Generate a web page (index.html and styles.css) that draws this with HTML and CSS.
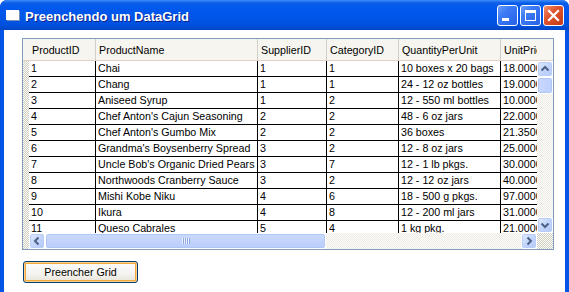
FILE: index.html
```html
<!DOCTYPE html>
<html lang="pt">
<head>
    <meta charset="UTF-8">
    <title>Preenchendo um DataGrid</title>
    <link rel="stylesheet" href="styles.css">
</head>
<body>
    <div class="window">
        <div class="titlebar">
            <svg class="app-icon" width="15" height="12" viewBox="0 0 15 12">
                <rect x="1" y="1" width="13" height="10" fill="#7a8fb8"/>
                <rect x="0" y="0" width="13" height="10" fill="#fff"/>
            </svg>
            <span class="title">Preenchendo um DataGrid</span>
            <div class="controls">
                <div class="ctl">
                    <svg width="19" height="19" viewBox="0 0 19 19"><rect x="4" y="12" width="7" height="3" fill="#fff"/></svg>
                </div>
                <div class="ctl">
                    <svg width="19" height="19" viewBox="0 0 19 19"><rect x="4.5" y="4.5" width="10" height="10" fill="none" stroke="#fff"/><rect x="4" y="4" width="11" height="3" fill="#fff"/></svg>
                </div>
                <div class="ctl close">
                    <svg width="19" height="19" viewBox="0 0 19 19"><path d="M5 5 L14 14 M14 5 L5 14" stroke="#fff" stroke-width="2.2" stroke-linecap="square"/></svg>
                </div>
            </div>
        </div>

        <div class="client">
            <div class="datagrid">
                <div class="corner-head"></div>
                <div class="col-header">
                    <div class="head-cells">
                        <div class="hc c1">ProductID</div>
                        <div class="hc c2">ProductName</div>
                        <div class="hc c3">SupplierID</div>
                        <div class="hc c4">CategoryID</div>
                        <div class="hc c5">QuantityPerUnit</div>
                        <div class="hc c6">UnitPrice</div>
                    </div>
                </div>

                <div class="row-heads"></div>
                <div class="viewport">
                    <div class="row"><div class="c c1">1</div><div class="c c2">Chai</div><div class="c c3">1</div><div class="c c4">1</div><div class="c c5">10 boxes x 20 bags</div><div class="c c6">18.0000</div></div>
                    <div class="row"><div class="c c1">2</div><div class="c c2">Chang</div><div class="c c3">1</div><div class="c c4">1</div><div class="c c5">24 - 12 oz bottles</div><div class="c c6">19.0000</div></div>
                    <div class="row"><div class="c c1">3</div><div class="c c2">Aniseed Syrup</div><div class="c c3">1</div><div class="c c4">2</div><div class="c c5">12 - 550 ml bottles</div><div class="c c6">10.0000</div></div>
                    <div class="row"><div class="c c1">4</div><div class="c c2">Chef Anton's Cajun Seasoning</div><div class="c c3">2</div><div class="c c4">2</div><div class="c c5">48 - 6 oz jars</div><div class="c c6">22.0000</div></div>
                    <div class="row"><div class="c c1">5</div><div class="c c2">Chef Anton's Gumbo Mix</div><div class="c c3">2</div><div class="c c4">2</div><div class="c c5">36 boxes</div><div class="c c6">21.3500</div></div>
                    <div class="row"><div class="c c1">6</div><div class="c c2">Grandma's Boysenberry Spread</div><div class="c c3">3</div><div class="c c4">2</div><div class="c c5">12 - 8 oz jars</div><div class="c c6">25.0000</div></div>
                    <div class="row"><div class="c c1">7</div><div class="c c2">Uncle Bob's Organic Dried Pears</div><div class="c c3">3</div><div class="c c4">7</div><div class="c c5">12 - 1 lb pkgs.</div><div class="c c6">30.0000</div></div>
                    <div class="row"><div class="c c1">8</div><div class="c c2">Northwoods Cranberry Sauce</div><div class="c c3">3</div><div class="c c4">2</div><div class="c c5">12 - 12 oz jars</div><div class="c c6">40.0000</div></div>
                    <div class="row"><div class="c c1">9</div><div class="c c2">Mishi Kobe Niku</div><div class="c c3">4</div><div class="c c4">6</div><div class="c c5">18 - 500 g pkgs.</div><div class="c c6">97.0000</div></div>
                    <div class="row"><div class="c c1">10</div><div class="c c2">Ikura</div><div class="c c3">4</div><div class="c c4">8</div><div class="c c5">12 - 200 ml jars</div><div class="c c6">31.0000</div></div>
                    <div class="row"><div class="c c1">11</div><div class="c c2">Queso Cabrales</div><div class="c c3">5</div><div class="c c4">4</div><div class="c c5">1 kg pkg.</div><div class="c c6">21.0000</div></div>
                </div>
                <div class="vscroll">
                    <div class="sb-btn">
                        <svg width="14" height="14" viewBox="0 0 14 14"><path d="M3.5 8.5 L7 5 L10.5 8.5" fill="none" stroke="#4d6185" stroke-width="2"/></svg>
                    </div>
                    <div class="thumb-v"></div>
                    <div class="track"></div>
                    <div class="sb-btn">
                        <svg width="14" height="14" viewBox="0 0 14 14"><path d="M3.5 5.5 L7 9 L10.5 5.5" fill="none" stroke="#4d6185" stroke-width="2"/></svg>
                    </div>
                </div>

                <div class="row-heads"></div>
                <div class="hscroll">
                    <div class="sb-btn">
                        <svg width="14" height="14" viewBox="0 0 14 14"><path d="M8.5 3.5 L5 7 L8.5 10.5" fill="none" stroke="#4d6185" stroke-width="2"/></svg>
                    </div>
                    <div class="thumb-h"><span class="grip"></span></div>
                    <div class="track"></div>
                    <div class="sb-btn">
                        <svg width="14" height="14" viewBox="0 0 14 14"><path d="M5.5 3.5 L9 7 L5.5 10.5" fill="none" stroke="#4d6185" stroke-width="2"/></svg>
                    </div>
                </div>
                <div class="sb-corner"></div>
            </div>

            <button class="fill-btn" type="button">Preencher Grid</button>
        </div>
    </div>
</body>
</html>
```

FILE: styles.css
```css
body {
    margin: 0;
    font-family: "Liberation Sans", Arial, sans-serif;
    font-size: 10.7px;
    background-color: #fff;
}
.window {
    width: 569px;
    height: 292px;
    display: flex;
    flex-direction: column;
    background-color: #0454e6;
    border-radius: 7px 7px 0 0;
    overflow: hidden;
}
.titlebar {
    height: 30px;
    flex-shrink: 0;
    display: flex;
    align-items: center;
    padding: 0 5px 0 6px;
    background: linear-gradient(#3d8df8 0, #0a5de8 3px, #0058ee 8px, #0055e8 60%, #0050dc 85%, #0045c4 100%);
}
.app-icon {
    margin-top: 2px;
}
.title {
    flex: 1;
    margin: 3px 0 0 4px;
    color: #fff;
    font-size: 13px;
    font-weight: bold;
    text-shadow: 1px 1px #0c1f8a;
}
.controls {
    display: flex;
    gap: 2px;
}
.ctl {
    width: 21px;
    height: 21px;
    box-sizing: border-box;
    border: 1px solid #fff;
    border-radius: 3px;
    display: flex;
    align-items: center;
    justify-content: center;
    background: linear-gradient(135deg, #6b9cf9 0, #3c7bf5 35%, #2660e6 100%);
}
.ctl.close {
    background: linear-gradient(135deg, #f0916e 0, #e0552f 40%, #c63b17 100%);
}
.client {
    flex: 1;
    margin: 0 4px;
    padding: 8px 0 0 18px;
    background-color: #fff;
}

/* data grid */
.datagrid {
    width: 532px;
    height: 212px;
    box-sizing: border-box;
    border: 1px solid #7f9db9;
    display: grid;
    grid-template-columns: 6px 508px 16px;
    grid-template-rows: 22px 172px 16px;
}
.corner-head {
    background-color: #f6f5f0;
    border-bottom: 1px solid #e4cfc6;
}
.col-header {
    grid-column: 2 / 4;
    background-color: #f6f5f0;
    border-bottom: 1px solid #e4cfc6;
}
.head-cells {
    width: 508px;
    height: 21px;
    display: flex;
    overflow: hidden;
}
.hc {
    flex-shrink: 0;
    box-sizing: border-box;
    padding: 3px 0 0 3px;
    border-right: 1px solid #d3d0c6;
    color: #000;
    white-space: nowrap;
    line-height: 16px;
}
.row-heads,
.sb-corner {
    background: repeating-conic-gradient(#d2cec2 0 25%, #fbfbf8 0 50%) 0 0 / 2px 2px;
}
.viewport {
    overflow: hidden;
    background-color: #fff;
}
.row {
    display: flex;
    height: 16px;
    box-sizing: border-box;
    border-bottom: 1px solid #000;
}
.c {
    flex-shrink: 0;
    box-sizing: border-box;
    padding-left: 2px;
    border-right: 1px solid #000;
    color: #000;
    white-space: nowrap;
    overflow: hidden;
    line-height: 15px;
}
.c1 { width: 67px; }
.c2 { width: 162px; }
.c3 { width: 69px; }
.c4 { width: 72px; }
.c5 { width: 102px; }
.c6 { width: 80px; }

/* scrollbars */
.vscroll {
    display: flex;
    flex-direction: column;
}
.hscroll {
    display: flex;
}
.track {
    flex: 1;
    background: repeating-conic-gradient(#ebe9e0 0 25%, #fefefe 0 50%) 0 0 / 2px 2px;
}
.sb-btn {
    width: 16px;
    height: 16px;
    flex-shrink: 0;
    box-sizing: border-box;
    border: 1px solid #fff;
    border-radius: 3px;
    display: flex;
    align-items: center;
    justify-content: center;
    background: linear-gradient(135deg, #e2ebfe 0, #c4d5fc 50%, #b2c8f8 100%);
    box-shadow: inset 0 0 0 1px #b8cdf8;
}
.thumb-v {
    height: 17px;
    box-sizing: border-box;
    border: 1px solid #fff;
    border-radius: 3px;
    background: linear-gradient(90deg, #c9d8fd 0, #bccffc 100%);
    box-shadow: inset 0 0 0 1px #b1c6f6;
}
.thumb-h {
    width: 281px;
    box-sizing: border-box;
    border: 1px solid #fff;
    border-radius: 3px;
    background: linear-gradient(#cadafd 0, #b9cdfb 100%);
    box-shadow: inset 0 0 0 1px #b1c6f6;
    display: flex;
    align-items: center;
    justify-content: center;
}
.grip {
    width: 8px;
    height: 6px;
    background: repeating-linear-gradient(90deg, #eef3ff 0 1px, #8ca7e6 1px 2px);
}

.fill-btn {
    display: block;
    width: 115px;
    height: 22px;
    margin: 11px 0 0 1px;
    padding: 0;
    font-family: "Liberation Sans", Arial, sans-serif;
    font-size: 10.7px;
    color: #000;
    border: 1px solid #003c74;
    border-radius: 3px;
    background: linear-gradient(#fefefe 0, #f4f3ee 60%, #e6e3d8 100%);
    box-shadow: inset 0 0 0 1px #fcd38c, inset 0 0 0 2px #f2a73c;
}
```
